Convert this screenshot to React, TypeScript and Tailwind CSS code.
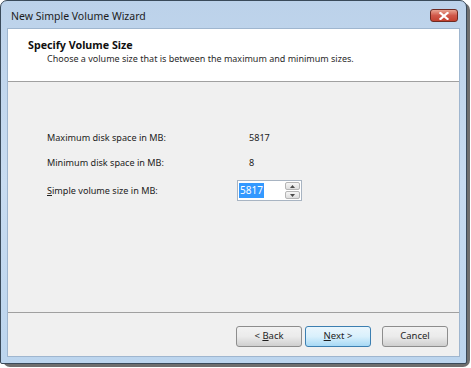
import React from 'react';

const font = { fontFamily: '"Noto Sans", "Open Sans", sans-serif' };

const WizardButton = ({ children, primary }: { children: React.ReactNode; primary?: boolean }) => (
  <div
    className={`w-[66px] h-[21px] rounded-[3px] border flex items-center justify-center text-[9.5px] text-[#1e1e1e] ${
      primary
        ? 'border-[#3c7fb1] bg-gradient-to-b from-[#eaf6fd] via-[#d9f0fc] to-[#a7d9f5]'
        : 'border-[#8d8d8d] bg-gradient-to-b from-[#f2f2f2] via-[#ebebeb] to-[#cfcfcf]'
    }`}
  >
    {children}
  </div>
);

export default function App() {
  return (
    <div className="w-[471px] h-[368px] bg-white relative overflow-hidden" style={font}>
      {/* drop shadow */}
      <div className="absolute left-[3px] top-[3px] w-[467px] h-[364px] rounded-[7px] bg-[#4a4a4a] opacity-80" />
      <div className="absolute left-0 top-0 w-[467px] h-[364px] rounded-t-[7px] rounded-b-[2px] border border-[#3a4a5a] bg-gradient-to-b from-[#bcd2ea] via-[#c8dcf1] to-[#bcd5ee] flex flex-col">
        {/* title bar */}
        <div className="h-[27px] flex items-center justify-between pl-[10px] pr-[8px] shrink-0">
          <span className="text-[10.5px] text-[#1c1c1c] pt-[4px]">New Simple Volume Wizard</span>
          <div className="w-[28px] h-[13px] mt-[2px] rounded-[3px] border border-[#6e2a22] bg-gradient-to-b from-[#e8a493] via-[#d0584a] to-[#c3412f] flex items-center justify-center">
            <svg width="10" height="8" viewBox="0 0 10 8">
              <path d="M1.5 1 L8.5 7 M8.5 1 L1.5 7" stroke="white" strokeWidth="2.2" strokeLinecap="square" />
            </svg>
          </div>
        </div>

        {/* client area */}
        <div className="mx-[6px] mb-[6px] flex-1 flex flex-col bg-[#f0f0f0] border border-[#9fb6cf]">
          {/* header */}
          <div className="h-[53px] bg-white border-b border-[#a0a0a0] pl-[20px] pt-[9px] shrink-0">
            <div className="text-[10.7px] font-bold text-[#101010] leading-[14px]">Specify Volume Size</div>
            <div className="text-[9px] text-[#2a2a2a] leading-[14px] pl-[19px]">
              Choose a volume size that is between the maximum and minimum sizes.
            </div>
          </div>

          {/* body */}
          <div className="flex-1 border-b border-[#a0a0a0] pl-[39px] pt-[48px] text-[9.1px] text-[#222]">
            <div className="grid grid-cols-[190px_auto] items-center gap-y-[9px]">
              <div className="h-[16px] flex items-center">Maximum disk space in MB:</div>
              <div className="h-[16px] flex items-center pl-[12px]">5817</div>
              <div className="h-[16px] flex items-center">Minimum disk space in MB:</div>
              <div className="h-[16px] flex items-center pl-[12px]">8</div>
              <div className="h-[16px] flex items-center">
                <span>
                  <span className="underline">S</span>imple volume size in MB:
                </span>
              </div>
              <div className="flex items-center">
                <div className="w-[65px] h-[21px] border border-[#a8b4c2] bg-white flex items-center pl-[1px] pr-[1px]">
                  <span className="bg-[#3399ff] text-white px-[1px] leading-[15px] text-[10px]">5817</span>
                  <div className="ml-auto w-[15px] h-[17px] flex flex-col gap-[1px]">
                    <div className="flex-1 border border-[#b5b5b5] rounded-[2px] bg-gradient-to-b from-[#f6f6f6] to-[#dedede] flex items-center justify-center">
                      <svg width="5" height="3" viewBox="0 0 5 3"><path d="M0 3 L2.5 0 L5 3 Z" fill="#4a4a4a" /></svg>
                    </div>
                    <div className="flex-1 border border-[#b5b5b5] rounded-[2px] bg-gradient-to-b from-[#f6f6f6] to-[#dedede] flex items-center justify-center">
                      <svg width="5" height="3" viewBox="0 0 5 3"><path d="M0 0 L5 0 L2.5 3 Z" fill="#4a4a4a" /></svg>
                    </div>
                  </div>
                </div>
              </div>
            </div>
          </div>

          {/* footer */}
          <div className="h-[43px] shrink-0 flex items-start justify-end pr-[11px] pt-[13px]">
            <div className="flex gap-[3px]">
              <WizardButton>
                &lt;&nbsp;<span className="underline">B</span>ack
              </WizardButton>
              <WizardButton primary>
                <span className="underline">N</span>ext&nbsp;&gt;
              </WizardButton>
            </div>
            <div className="ml-[11px]">
              <WizardButton>Cancel</WizardButton>
            </div>
          </div>
        </div>
      </div>
    </div>
  );
}
